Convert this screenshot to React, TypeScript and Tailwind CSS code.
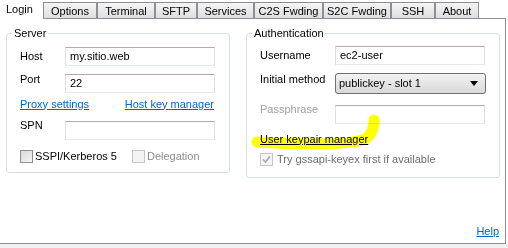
import React from "react";

const tabs = [
  { label: "Options", w: "w-[54px]" },
  { label: "Terminal", w: "w-[58px]" },
  { label: "SFTP", w: "w-[42px]" },
  { label: "Services", w: "w-[57px]" },
  { label: "C2S Fwding", w: "w-[69px]" },
  { label: "S2C Fwding", w: "w-[68px]" },
  { label: "SSH", w: "w-[44px]" },
  { label: "About", w: "w-[44px]" },
];

function TextBox({ value = "", className = "" }: { value?: string; className?: string }) {
  return (
    <div
      className={`h-[19px] w-[150px] border border-[#abadb3] border-l-[#dbdfe6] border-r-[#dbdfe6] border-b-[#e3e9ef] bg-white flex items-center pl-[4px] ${className}`}
    >
      {value}
    </div>
  );
}

function CheckBox({ checked = false, disabled = false }: { checked?: boolean; disabled?: boolean }) {
  return (
    <span
      className={`w-[13px] h-[13px] shrink-0 border flex items-center justify-center ${
        disabled ? "border-[#c5c5c5] bg-[#f4f4f4]" : "border-[#8f8f8f] bg-gradient-to-br from-[#d8d8d8] to-[#f6f6f6]"
      }`}
    >
      {checked && (
        <svg width="9" height="9" viewBox="0 0 9 9">
          <path d="M1 4.5 L3.5 7 L8 1.5" fill="none" stroke="#a8a8a8" strokeWidth="1.6" />
        </svg>
      )}
    </span>
  );
}

function Row({ label, children, labelClass = "", labelWidth = "w-[45px]" }: React.PropsWithChildren<{ label: string; labelClass?: string; labelWidth?: string }>) {
  return (
    <div className="flex items-center">
      <span className={`${labelWidth} shrink-0 ${labelClass}`}>{label}</span>
      {children}
    </div>
  );
}

export default function App() {
  return (
    <div className="relative w-[508px] h-[248px] bg-white text-[11px] leading-[13px] text-black font-['Liberation_Sans',Arial,sans-serif] overflow-hidden">
      {/* tab strip */}
      <div className="flex items-end h-[19px] w-[506px]">
        <div className="w-[43px] h-[19px] flex items-start pt-[3px] pl-[6px] bg-white">Login</div>
        {tabs.map((t) => (
          <div
            key={t.label}
            className={`${t.w} h-[17px] flex items-center justify-center border border-b-0 border-[#8c8e94] bg-gradient-to-b from-[#f4f4f4] to-[#dedede] shadow-[inset_0_-1px_0_#8c8e94]`}
          >
            {t.label}
          </div>
        ))}
        <div className="flex-1 h-[1px] bg-[#8c8e94]" />
      </div>

      {/* page */}
      <div className="w-[506px] h-[225px] border-r border-b border-[#8c8e94] flex flex-col">
        <div className="flex items-start gap-[16px] pl-[6px] mt-[8px]">
          {/* Server */}
          <fieldset className="w-[224px] h-[146px] border border-[#d5dfe5] rounded-[3px] px-[13px]">
            <legend className="ml-[-8px] px-[2px]">Server</legend>
            <div className="flex flex-col mt-[7px]">
              <Row label="Host">
                <TextBox value="my.sitio.web" />
              </Row>
              <Row label="Port">
                <TextBox value="22" className="mt-[8px]" />
              </Row>
              <div className="flex justify-between mt-[4px] h-[14px] items-center pr-[2px]">
                <span className="text-[#0066cc] underline">Proxy settings</span>
                <span className="text-[#0066cc] underline">Host key manager</span>
              </div>
              <Row label="SPN">
                <TextBox className="mt-[10px]" />
              </Row>
              <div className="flex items-center mt-[10px] h-[13px]">
                <CheckBox />
                <span className="ml-[2px]">SSPI/Kerberos 5</span>
                <span className="ml-[15px]">
                  <CheckBox disabled />
                </span>
                <span className="ml-[2px] text-[#8d8d8d]">Delegation</span>
              </div>
            </div>
          </fieldset>

          {/* Authentication */}
          <fieldset className="w-[250px] h-[151px] border border-[#d5dfe5] rounded-[3px] px-[13px]">
            <legend className="ml-[-7px] px-[1px]">Authentication</legend>
            <div className="flex flex-col mt-[6px]">
              <Row label="Username" labelWidth="w-[75px]">
                <TextBox value="ec2-user" />
              </Row>
              <Row label="Initial method" labelWidth="w-[75px]">
                <div className="mt-[8px] h-[21px] w-[151px] rounded-[3px] border border-[#707070] bg-gradient-to-b from-[#f2f2f2] to-[#d9d9d9] flex items-center justify-between pl-[3px] pr-[7px]">
                  <span>publickey - slot 1</span>
                  <svg width="8" height="5" viewBox="0 0 8 5">
                    <path d="M0 0 H8 L4 5 Z" fill="#000" />
                  </svg>
                </div>
              </Row>
              <Row label="Passphrase" labelWidth="w-[75px]" labelClass="text-[#a0a0a0]">
                <TextBox className="mt-[11px]" />
              </Row>
              <div className="mt-[8px] h-[14px] flex items-center">
                <span className="underline">User keypair manager</span>
              </div>
              <div className="flex items-center mt-[7px] h-[13px]">
                <CheckBox checked disabled />
                <span className="ml-[4px] text-[#6d6d6d]">Try gssapi-keyex first if available</span>
              </div>
            </div>
          </fieldset>
        </div>

        <div className="flex-1 flex items-end justify-end pr-[6px] pb-[5px]">
          <span className="text-[#0066cc] underline">Help</span>
        </div>
      </div>

      <div className="h-[4px] bg-[#f0f0f0]" />

      {/* marker scribble over the keypair link */}
      <svg className="absolute inset-0 pointer-events-none mix-blend-multiply" width="508" height="248" viewBox="0 0 508 248">
        <path
          d="M257 142 C 300 145, 350 145, 365 139 C 372 135, 374 127, 374 120"
          fill="none"
          stroke="#ffff00"
          strokeWidth="11"
          strokeLinecap="round"
        />
      </svg>
    </div>
  );
}
